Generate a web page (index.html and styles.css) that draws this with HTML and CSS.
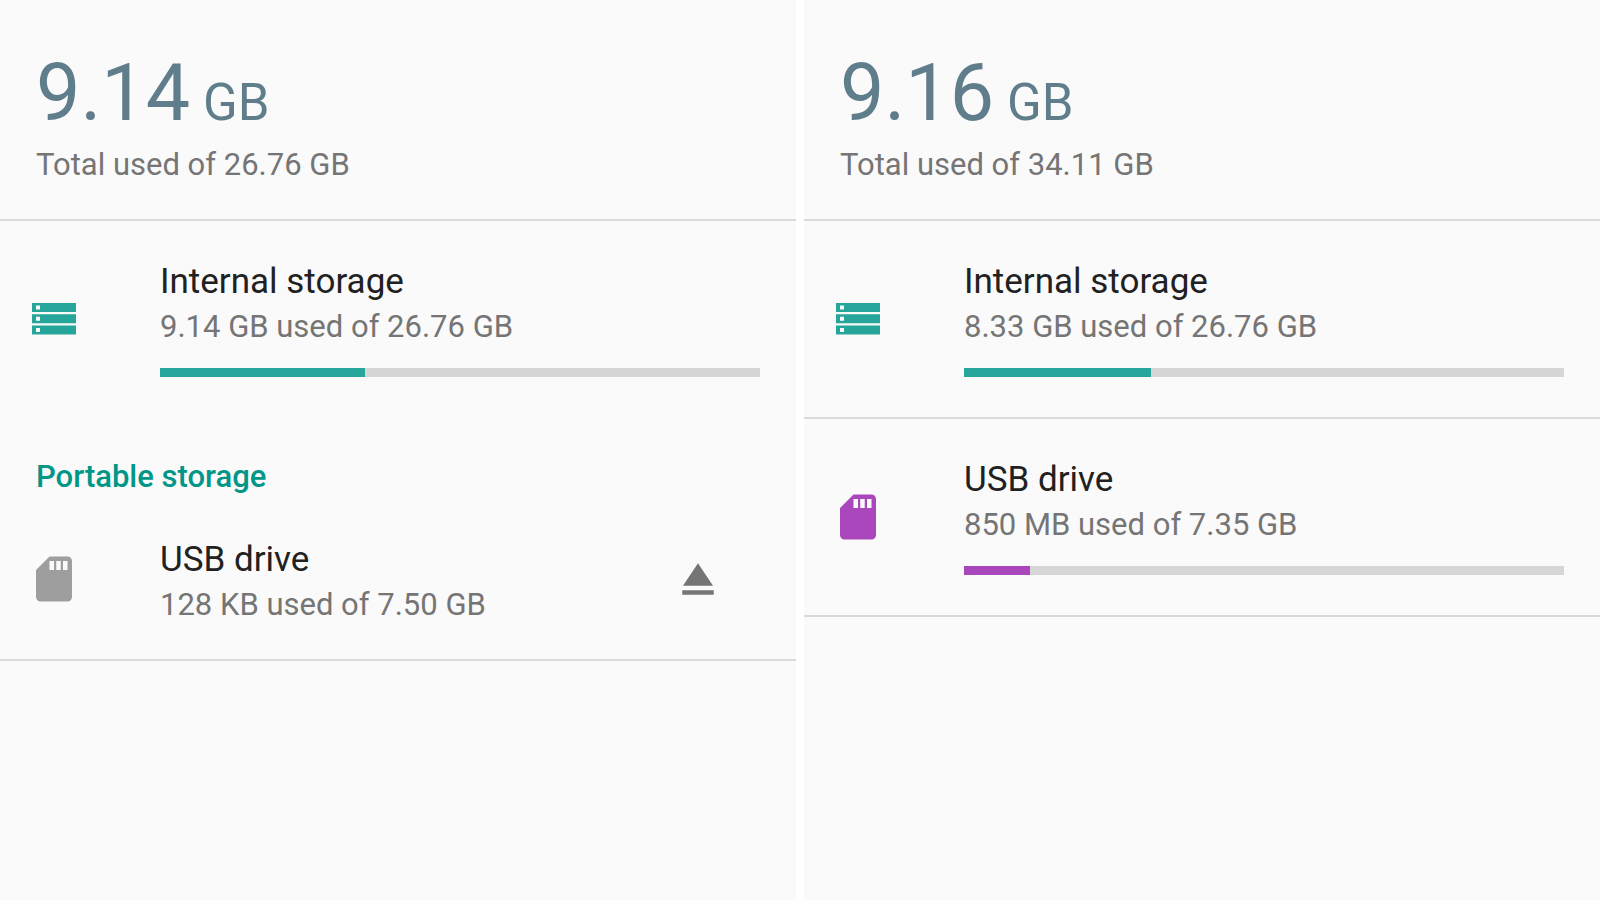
FILE: index.html
```html
<!DOCTYPE html>
<html lang="en">
<head>
<meta charset="utf-8">
<meta name="viewport" content="width=device-width, initial-scale=1">
<title>Storage</title>
<link rel="stylesheet" href="styles.css">
</head>
<body>
<svg class="sprite" aria-hidden="true">
  <symbol id="storage" viewBox="0 0 54 54">
    <path fill-rule="evenodd" d="M5 11h44v9H5zm4 2.500v4h4v-4zM5 22.200h44v9H5zm4 2.500v4h4v-4zM5 33.400h44v9H5zm4 2.500v4h4v-4z"/>
  </symbol>
  <symbol id="sd" viewBox="0 0 24 24">
    <path d="M18 2h-8L4 8v12c0 1.100.9 2 2 2h12c1.100 0 2-.9 2-2V4c0-1.100-.9-2-2-2zm-6 6h-2V4h2v4zm3 0h-2V4h2v4zm3 0h-2V4h2v4z"/>
  </symbol>
  <symbol id="eject" viewBox="0 0 24 24">
    <path d="M5 17h14v2H5zm7-12L5.330 15h13.340z"/>
  </symbol>
</svg>
<main class="screens">
  <section class="panel">
    <header class="total">
      <h1 class="amount"><span>9.14</span> <span class="unit">GB</span></h1>
      <p class="summary">Total used of 26.76 GB</p>
    </header>
    <div class="volume">
      <svg class="icon teal" aria-hidden="true"><use href="#storage"/></svg>
      <div class="details">
        <h2 class="name" id="internal-a">Internal storage</h2>
        <p class="summary">9.14 GB used of 26.76 GB</p>
        <progress class="usage teal" aria-labelledby="internal-a" max="26.76" value="9.14"></progress>
      </div>
    </div>
    <h2 class="category">Portable storage</h2>
    <div class="volume last">
      <svg class="icon grey" aria-hidden="true"><use href="#sd"/></svg>
      <div class="details">
        <h3 class="name">USB drive</h3>
        <p class="summary">128 KB used of 7.50 GB</p>
      </div>
      <button class="eject" type="button" aria-label="Eject USB drive"><svg class="icon" aria-hidden="true"><use href="#eject"/></svg></button>
    </div>
  </section>
  <section class="panel">
    <header class="total">
      <h1 class="amount"><span>9.16</span> <span class="unit">GB</span></h1>
      <p class="summary">Total used of 34.11 GB</p>
    </header>
    <div class="volume last">
      <svg class="icon teal" aria-hidden="true"><use href="#storage"/></svg>
      <div class="details">
        <h2 class="name" id="internal-b">Internal storage</h2>
        <p class="summary">8.33 GB used of 26.76 GB</p>
        <progress class="usage teal" aria-labelledby="internal-b" max="26.76" value="8.33"></progress>
      </div>
    </div>
    <div class="volume last">
      <svg class="icon purple" aria-hidden="true"><use href="#sd"/></svg>
      <div class="details">
        <h2 class="name" id="usb-b">USB drive</h2>
        <p class="summary">850 MB used of 7.35 GB</p>
        <progress class="usage purple" aria-labelledby="usb-b" max="7500" value="830"></progress>
      </div>
    </div>
  </section>
</main>
</body>
</html>
```
FILE: styles.css
```css
* {
  box-sizing: border-box;
}

body {
  margin: 0;
  background: #fff;
  color: #212121;
  font-family: Roboto, "Noto Sans", sans-serif;
}

h1, h2, h3, p {
  margin: 0;
  font-weight: 400;
}

.sprite {
  display: none;
}

.screens {
  display: grid;
  grid-template-columns: 1fr 1fr;
  gap: 8px;
  min-height: 100vh;
}

.panel {
  background: #fafafa;
}

.total {
  padding: 46px 36px 36px;
  border-bottom: 2px solid #dadada;
}

.amount {
  display: flex;
  align-items: baseline;
  gap: 13px;
  margin-bottom: 7px;
  color: #607d8b;
  font-size: 79px;
  line-height: 94px;
}

.unit {
  font-size: 51px;
  line-height: 60px;
}

.summary {
  color: #757575;
  font-size: 31px;
  line-height: 36px;
}

.volume {
  display: flex;
  align-items: center;
  padding: 36px 36px 36px 27px;
}

.last {
  border-bottom: 2px solid #dadada;
}

.icon {
  display: block;
  flex: none;
  width: 54px;
  height: 54px;
  fill: currentColor;
}

.details {
  flex: 1;
  margin-left: 79px;
  padding-top: 4px;
}

.name {
  margin-bottom: 6px;
  font-size: 35px;
  line-height: 42px;
}

.usage {
  display: block;
  width: 100%;
  height: 9px;
  margin: 23px 0 4px;
  border: 0;
  appearance: none;
  background: #d6d6d6;
}

.usage::-webkit-progress-bar {
  background: #d6d6d6;
}

.usage::-webkit-progress-value {
  background: currentColor;
}

.usage::-moz-progress-bar {
  background: currentColor;
}

.teal {
  color: #26a69a;
}

.purple {
  color: #ab47bc;
}

.grey {
  color: #9e9e9e;
}

.category {
  padding: 42px 36px 4px;
  color: #009688;
  font-size: 31px;
  font-weight: 500;
  line-height: 36px;
}

.eject {
  margin-right: 35px;
  padding: 0;
  border: 0;
  background: none;
  color: #757575;
}
```
